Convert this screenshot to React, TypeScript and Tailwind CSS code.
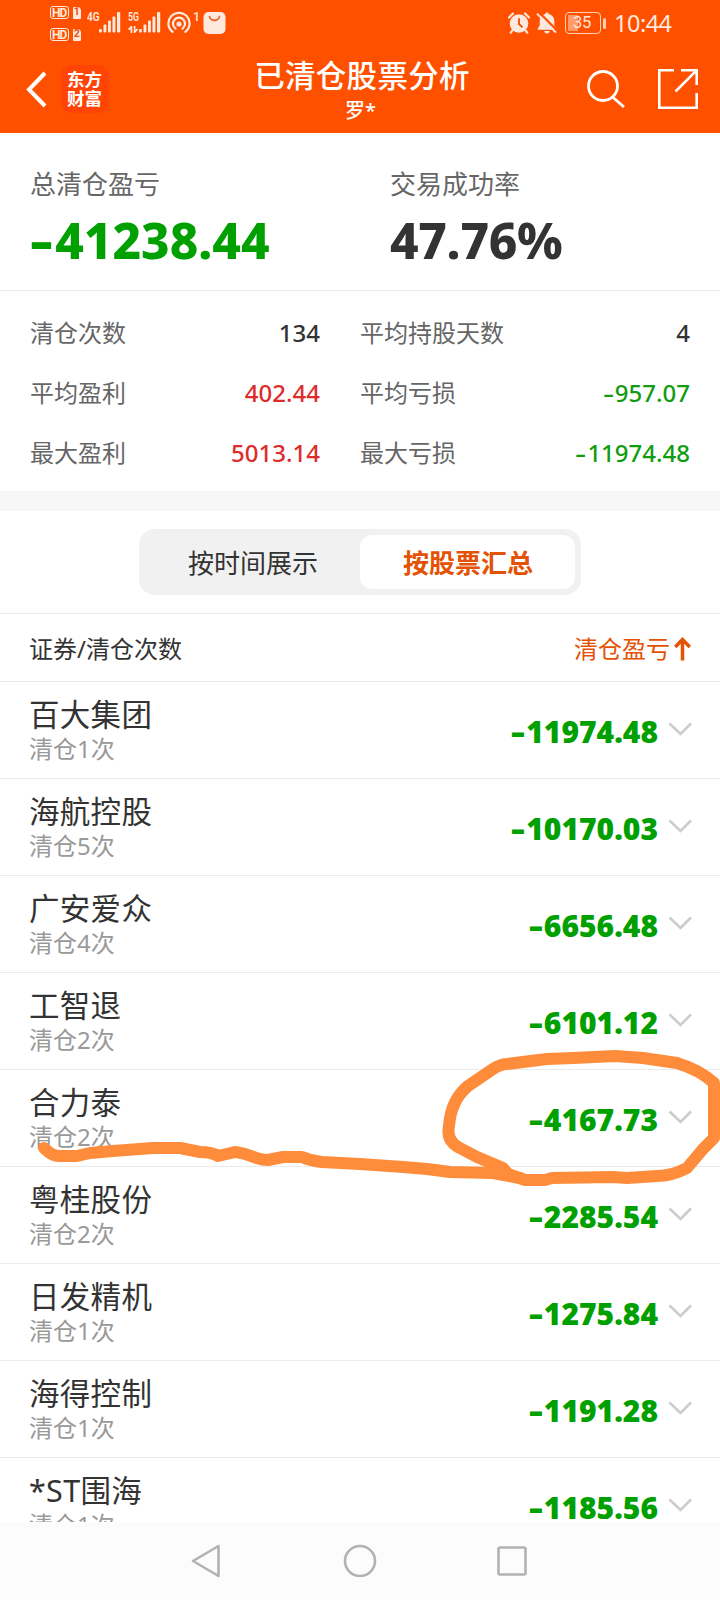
import React from 'react';

interface StatProps {
  label: string;
  value: string;
  color?: string;
}

interface Stock {
  name: string;
  times: number;
  profit: string;
}

const stocks: Stock[] = [
  { name: '百大集团', times: 1, profit: '-11974.48' },
  { name: '海航控股', times: 5, profit: '-10170.03' },
  { name: '广安爱众', times: 4, profit: '-6656.48' },
  { name: '工智退', times: 2, profit: '-6101.12' },
  { name: '合力泰', times: 2, profit: '-4167.73' },
  { name: '粤桂股份', times: 2, profit: '-2285.54' },
  { name: '日发精机', times: 1, profit: '-1275.84' },
  { name: '海得控制', times: 1, profit: '-1191.28' },
  { name: '*ST围海', times: 1, profit: '-1185.56' },
];

const HdBadge = ({ sim }: { sim: string }) => (
  <div className="flex h-[13px] items-center gap-[4px] font-['Roboto'] font-bold leading-none">
    <span className="flex h-[13px] w-[18.5px] shrink-0 items-center justify-center rounded-[3px] border-[1.5px] border-[#ffe9df] text-[12px] tracking-[-1px]">HD</span>
    <span className="flex h-[12px] w-[8.5px] shrink-0 items-center justify-center rounded-[1px] rounded-tr-[4px] bg-[#ffe9df] text-[10.5px] text-[#e8500f]">{sim}</span>
  </div>
);

const Signal = () => (
  <svg width="22" height="21" viewBox="0 0 22 21" fill="#ffe9df">
    <rect x="0" y="17" width="2.9" height="3.5" rx="1" />
    <rect x="4.5" y="12.5" width="2.9" height="8" rx="1" />
    <rect x="9" y="8.5" width="2.9" height="12" rx="1" />
    <rect x="13.5" y="4.5" width="2.9" height="16" rx="1" />
    <rect x="18" y="0" width="3.2" height="20.5" rx="1" />
  </svg>
);

const StatusBar = () => (
  <div className="flex h-[46px] items-start justify-between pl-[50px] pr-[48px] text-[#ffe9df]">
    <div className="flex items-start">
      <div className="flex w-[31px] flex-col gap-[9px] pt-[6px]">
        <HdBadge sim="1" />
        <HdBadge sim="2" />
      </div>
      <span className="ml-[6px] mt-[10px] w-[12px] origin-left scale-x-[0.8] font-['Roboto'] text-[12.5px] font-semibold leading-[13px]">4G</span>
      <div className="mt-[12px]"><Signal /></div>
      <div className="ml-[7px] mt-[10px] w-[11px]">
        <span className="block origin-left scale-x-[0.7] font-['Roboto'] text-[12.5px] font-semibold leading-[13px]">5G</span>
        <svg className="mt-[3px]" width="11" height="7" viewBox="0 0 11 7" fill="none" stroke="#ffe9df" strokeWidth="1.7">
          <path d="M3.400 7V0.800L0.600 3.600M6.600 0V6.200L9.600 3" />
        </svg>
      </div>
      <div className="mt-[12px]"><Signal /></div>
      <svg className="ml-[6px] mt-[11px]" width="24" height="23" viewBox="0 0 24 23" fill="none" stroke="#ffe9df" strokeWidth="2.2" strokeLinecap="round">
        <circle cx="12" cy="13" r="2.6" fill="#ffe9df" stroke="none" />
        <path d="M8.6 17.6a6 6 0 1 1 6.800 0" />
        <path d="M5.6 20.9a10.6 10.6 0 1 1 12.800 0" />
      </svg>
      <span className="ml-[2px] mt-[10px] w-[7px] font-['Roboto'] text-[12.5px] font-medium leading-[13px]">1</span>
      <svg className="ml-[3px] mt-[12px]" width="23" height="22" viewBox="0 0 23 22">
        <rect x="0.5" y="0" width="22" height="22" rx="5" fill="#ffe9df" />
        <path d="M6.5 4.5c1.5 5.2 8.500 5.200 10 0" fill="none" stroke="#e8601f" strokeWidth="1.6" strokeLinecap="round" />
      </svg>
    </div>

    <div className="flex items-start pt-[12px]">
      <svg width="22" height="22" viewBox="0 0 22 22" fill="none" stroke="#ffe9df">
        <circle cx="11" cy="11.500" r="9.3" fill="#ffe9df" stroke="none" />
        <path d="M1 5.500L5 1.500M21 5.500L17 1.500M4.600 18.200l-1.800 2.400M17.400 18.200l1.800 2.400" strokeWidth="2.200" strokeLinecap="round" />
        <path d="M11 6.200v5.800l3.500 3.200" stroke="#f0560f" strokeWidth="1.900" />
      </svg>
      <svg className="ml-[6px]" width="22" height="22" viewBox="0 0 22 22">
        <path d="M11 0.500c1 0 1.700.7 1.700 1.600 3.600.9 5.600 3.700 5.600 6.900v4.500l2 3.200v1H1.700v-1l2-3.200V9c0-3.200 2-6 5.600-6.900C9.300 1.200 10 .5 11 .5z" fill="#ffe9df" />
        <path d="M8.300 19h5.400a2.700 2.400 0 0 1-5.400 0z" fill="#ffe9df" />
        <path d="M2.900.3l18.600 18.600" stroke="#ff5000" strokeWidth="2.200" />
        <path d="M1 1.600l19 19" stroke="#ffe9df" strokeWidth="1.900" />
      </svg>
      <div className="ml-[7px] flex items-center">
        <div className="flex h-[22px] w-[36px] items-center justify-center rounded-[4px] border-[1.5px] border-[#ffd0b8] bg-linear-to-r from-[#ff9a6b] from-35% to-[#ff5000] to-35% bg-clip-content p-[2px] pr-[4px] font-['Roboto'] text-[16.5px] leading-none tracking-[-0.3px]">35</div>
        <div className="ml-[2px] h-[11px] w-[3px] rounded-full bg-[#ffd0b8]" />
      </div>
      <span className="ml-[8px] mt-[-1px] w-[58px] whitespace-nowrap text-[23.500px] leading-6 tracking-[-0.5px]">10:44</span>
    </div>
  </div>
);

const Header = () => (
  <header className="h-[133px] bg-[#ff5000] text-white">
    <StatusBar />
    <div className="grid grid-cols-[240px_1fr_240px]">
      <div className="flex items-start pl-[26px] pt-[19px]">
        <svg className="mt-[6px]" width="21" height="37" viewBox="0 0 21 37" fill="none" stroke="white" strokeWidth="4">
          <path d="M19 2L3 18.500L19 35" />
        </svg>
        <p className="ml-[14px] h-[48px] w-[48px] rounded-[10px] bg-[#ff4406] px-[6px] pt-[5px] text-[17.500px] font-bold leading-[19px] [word-break:break-all]">
          东方财富
        </p>
      </div>
      <div className="flex flex-col items-center pl-[4px] pt-[11px] font-medium">
        <h1 className="whitespace-nowrap text-[30.500px] leading-9 tracking-[0.3px]">已清仓股票分析</h1>
        <p className="mt-[4px] mr-[3px] text-[20px] leading-7">罗*</p>
      </div>
      <div className="flex items-start justify-end pr-[21px] pt-[22px]">
        <svg width="40" height="40" viewBox="0 0 40 40" fill="none" stroke="white" strokeWidth="2.800">
          <circle cx="17" cy="18" r="14.500" />
          <path d="M26.500 29L38 39" />
        </svg>
        <svg className="ml-[31px]" width="42" height="42" viewBox="0 0 42 42" fill="none" stroke="white" strokeWidth="2.600">
          <path d="M17 2.300H2.300V39.700H39.700V25" />
          <path d="M24 2.300H39.700V17M39.300 2.700L18.500 23.500" />
        </svg>
      </div>
    </div>
  </header>
);

// The sign is drawn wider than the font's own hyphen
const Amount = ({ value }: { value: string }) => (
  <>
    {value.startsWith('-') && <span className="mr-[0.19em] inline-block origin-left scale-x-[1.45]">-</span>}
    {value.replace('-', '')}
  </>
);

const Stat: React.FC<StatProps> = ({ label, value, color = 'text-[#333333]' }) => (
  <div className="flex h-[60px] items-center justify-between">
    <span className="text-[#666666]">{label}</span>
    <span className={`font-medium ${color}`}><Amount value={value} /></span>
  </div>
);

const Summary = () => (
  <section>
    <div className="grid h-[157px] grid-cols-2 px-[30px] pt-[33px]">
      <div>
        <p className="text-[26px] leading-9 text-[#666666]">总清仓盈亏</p>
        <p className="mt-[12px] whitespace-nowrap text-[49.500px] font-extrabold leading-[52px] text-[#00a000]"><Amount value="-41238.44" /></p>
      </div>
      <div className="pl-[30px]">
        <p className="text-[26px] leading-9 text-[#666666]">交易成功率</p>
        <p className="mt-[12px] text-[49.500px] font-extrabold leading-[52px] tracking-[-0.3px] text-[#333333]">47.76%</p>
      </div>
    </div>
    <div className="grid h-[201px] grid-cols-[290px_330px] content-start gap-x-[40px] border-t border-[#ebebeb] px-[30px] pt-[12px] text-[24px]">
      <Stat label="清仓次数" value="134" />
      <Stat label="平均持股天数" value="4" />
      <Stat label="平均盈利" value="402.44" color="text-[#dd2c2c]" />
      <Stat label="平均亏损" value="-957.07" color="text-[#119c11]" />
      <Stat label="最大盈利" value="5013.14" color="text-[#dd2c2c]" />
      <Stat label="最大亏损" value="-11974.48" color="text-[#119c11]" />
    </div>
  </section>
);

const Tabs = () => (
  <div className="flex h-[102px] justify-center pt-[18px]">
    <div className="flex h-[66px] w-[442px] rounded-[16px] bg-[#f1f1f1] p-[6px] text-[26px]">
      <button className="w-[215px] pl-[1px] pt-[2px] text-[#333333]">按时间展示</button>
      <button className="w-[215px] rounded-[12px] bg-white pl-[1px] pt-[2px] font-bold text-[#e35205]">按股票汇总</button>
    </div>
  </div>
);

const StockRow = ({ stock }: { stock: Stock }) => (
  <div className="flex h-[97px] shrink-0 items-start justify-between border-t border-[#ebebeb] pl-[29px] pr-[28px]">
    <div className="pt-[14px]">
      <p className="text-[30.500px] leading-9 tracking-[0.3px] text-[#333333]">{stock.name}</p>
      <p className="mt-[1px] text-[24px] leading-8 text-[#999999]">清仓{stock.times}次</p>
    </div>
    <div className="flex items-center pt-[32px]">
      <span className="text-[30px] font-black leading-9 text-[#00a000]"><Amount value={stock.profit} /></span>
      <svg className="mb-[5px] ml-[10px]" width="24" height="15" viewBox="0 0 24 15" fill="none" stroke="#cccccc" strokeWidth="2.600">
        <path d="M1.500 1.500L12.500 12L23 1.500" />
      </svg>
    </div>
  </div>
);

const StockList = () => (
  <section className="flex min-h-0 flex-1 flex-col overflow-hidden">
    <div className="flex h-[68px] shrink-0 items-center justify-between border-t border-[#ebebeb] pl-[29px] pr-[29px] pt-[3px] text-[24px] text-[#333333]">
      <span>证券/清仓次数</span>
      <span className="flex items-center text-[#e35205]">
        清仓盈亏
        <svg className="ml-[4px]" width="17" height="24" viewBox="0 0 17 24" fill="none" stroke="#e35205" strokeWidth="3.500">
          <path d="M8.500 23.500V3M1.200 10L8.500 2.500L15.800 10" />
        </svg>
      </span>
    </div>
    {stocks.map((stock) => (
      <StockRow key={stock.name} stock={stock} />
    ))}
  </section>
);

const NavBar = () => (
  <nav className="flex h-[78px] shrink-0 justify-center bg-[#fcfcfc] pt-[22px]">
    <svg width="340" height="34" viewBox="0 0 340 34" fill="none" stroke="#b2b2b2" strokeWidth="2.600" strokeLinejoin="round">
      <path d="M3 17L28.500 2V32z" />
      <circle cx="170" cy="17" r="15" />
      <rect x="308.500" y="3.500" width="27" height="27" rx="1.500" />
    </svg>
  </nav>
);

// Freehand marker strokes around the 合力泰 row
const Marker = () => (
  <svg className="pointer-events-none absolute left-0 top-0" width="720" height="1600" viewBox="0 0 720 1600" fill="none" stroke="#ff8c3a" strokeWidth="12" strokeLinecap="round" strokeLinejoin="round">
    <path d="M44 1148Q52 1156 59 1156L77 1156L90 1153L113 1151L153 1148L180 1148L200 1152Q212 1152 218 1156L235 1152Q244 1153 251 1156Q261 1160 268 1160L283 1157L302 1157Q311 1161 322 1162L360 1164L403 1167L427 1169L450 1172L493 1173L520 1178" />
    <path d="M503 1168L477 1157L458 1147Q446 1140 449 1126Q451 1100 468 1086L493 1069Q501 1064 507 1064L547 1059L573 1058L615 1056L643 1058L677 1063Q700 1070 714 1083V1138L703 1149L687 1168Q672 1176 657 1176L627 1178L613 1177L552 1178L545 1180H525L508 1174Z" />
  </svg>
);

export default function App() {
  return (
    <div className="relative flex h-[1600px] w-[720px] flex-col overflow-hidden bg-white font-['Noto_Sans','Noto_Sans_CJK_SC',sans-serif]">
      <Header />
      <Summary />
      <div className="h-[20px] shrink-0 bg-[#f7f7f7]" />
      <Tabs />
      <StockList />
      <NavBar />
      <Marker />
    </div>
  );
}
